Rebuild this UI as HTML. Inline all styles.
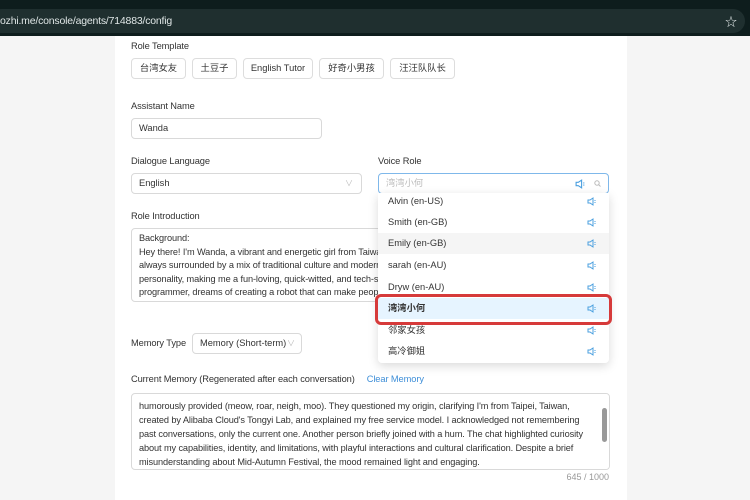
<!DOCTYPE html>
<html><head><meta charset="utf-8"><style>
*{margin:0;padding:0;box-sizing:border-box}
body{width:750px;height:500px;overflow:hidden;background:#f5f5f5;font-family:"Liberation Sans","Noto Sans CJK SC",sans-serif;color:#333;position:relative;font-size:10px}
.a{position:absolute}
.top{left:0;top:0;width:750px;height:36px;background:#0e1d1d}
.addr{left:-10px;top:9px;width:755px;height:24px;background:#1f2f2f;border-radius:12px;color:#dfe6e6;font-size:10.5px;line-height:24px;padding-left:10px;letter-spacing:-.2px}
.card{left:115px;top:36px;width:512px;height:464px;background:#fff}
.lbl{font-size:9.3px;color:#333;letter-spacing:-.1px}
.btn{height:21px;border:1px solid #ddd;border-radius:4px;font-size:9.3px;line-height:19px;text-align:center;background:#fff;color:#333}
.inp{border:1px solid #d9d9d9;border-radius:4px;background:#fff;font-size:9.3px;line-height:19px;padding-left:7px}
.txt{font-size:9.2px;line-height:13.3px;color:#333;padding:3px 7px;letter-spacing:-.1px}
.dd{left:378px;top:193px;width:231px;height:170px;background:#fff;box-shadow:0 3px 10px rgba(0,0,0,.15);border-radius:0 0 4px 4px;overflow:hidden}
.it{position:absolute;left:0;width:231px;height:21px;font-size:9.3px;line-height:21px;padding-left:10px;color:#333}
.sp{position:absolute;right:12px;top:6px;width:10px;height:9px}
</style></head><body>
<div class="a top"></div>
<div class="a addr">ozhi.me/console/agents/714883/config</div>
<div class="a" style="left:725px;top:13px;color:#e8eeee;font-size:12px">☆</div>
<div class="a card"></div>

<div class="a lbl" style="left:131px;top:41px">Role Template</div>
<div class="a btn" style="left:131px;top:58px;width:55px">台湾女友</div>
<div class="a btn" style="left:192px;top:58px;width:45px">土豆子</div>
<div class="a btn" style="left:243px;top:58px;width:70px">English Tutor</div>
<div class="a btn" style="left:319px;top:58px;width:65px">好奇小男孩</div>
<div class="a btn" style="left:390px;top:58px;width:65px">汪汪队队长</div>

<div class="a lbl" style="left:131px;top:101px">Assistant Name</div>
<div class="a inp" style="left:131px;top:118px;width:191px;height:21px">Wanda</div>

<div class="a lbl" style="left:131px;top:156px">Dialogue Language</div>
<div class="a inp" style="left:131px;top:173px;width:231px;height:21px">English<span style="position:absolute;right:8px;color:#bbb;font-size:8px">∨</span></div>
<div class="a lbl" style="left:378px;top:156px">Voice Role</div>
<div class="a inp" style="left:378px;top:173px;width:231px;height:21px;border-color:#7fb8ea;color:#bbb">湾湾小何<svg style="position:absolute;right:22px;top:5px" width="11" height="10" viewBox="0 0 10 9"><path d="M1 3h2l3-2v7L3 6H1z M8 3v1M8 5v1" fill="none" stroke="#4a9fdf" stroke-width="1"/></svg><svg style="position:absolute;right:7px;top:6px" width="7" height="7" viewBox="0 0 7 7"><circle cx="3" cy="3" r="2.2" fill="none" stroke="#bbb"/><path d="M4.6 4.6L6.5 6.5" stroke="#bbb"/></svg></div>

<div class="a lbl" style="left:131px;top:211px">Role Introduction</div>
<div class="a inp txt" style="left:131px;top:228px;width:280px;height:74px;overflow:hidden;white-space:nowrap;line-height:13.5px;padding-top:3px">Background:<br>Hey there! I'm Wanda, a vibrant and energetic girl from Taiwan<br>always surrounded by a mix of traditional culture and modern<br>personality, making me a fun-loving, quick-witted, and tech-savvy<br>programmer, dreams of creating a robot that can make people</div>

<div class="dd a">
<div class="it" style="top:-2px">Alvin (en-US)<svg class="sp" viewBox="0 0 10 9"><path d="M1 3h2l3-2v7L3 6H1z M8 3v1M8 5v1" fill="none" stroke="#4a9fdf" stroke-width="1"/></svg></div>
<div class="it" style="top:19px">Smith (en-GB)<svg class="sp" viewBox="0 0 10 9"><path d="M1 3h2l3-2v7L3 6H1z M8 3v1M8 5v1" fill="none" stroke="#4a9fdf" stroke-width="1"/></svg></div>
<div class="it" style="top:40px;background:#f5f5f5">Emily (en-GB)<svg class="sp" viewBox="0 0 10 9"><path d="M1 3h2l3-2v7L3 6H1z M8 3v1M8 5v1" fill="none" stroke="#4a9fdf" stroke-width="1"/></svg></div>
<div class="it" style="top:62px">sarah (en-AU)<svg class="sp" viewBox="0 0 10 9"><path d="M1 3h2l3-2v7L3 6H1z M8 3v1M8 5v1" fill="none" stroke="#4a9fdf" stroke-width="1"/></svg></div>
<div class="it" style="top:84px">Dryw (en-AU)<svg class="sp" viewBox="0 0 10 9"><path d="M1 3h2l3-2v7L3 6H1z M8 3v1M8 5v1" fill="none" stroke="#4a9fdf" stroke-width="1"/></svg></div>
<div class="it" style="top:105px;background:#e6f4ff;font-weight:bold">湾湾小何<svg class="sp" viewBox="0 0 10 9"><path d="M1 3h2l3-2v7L3 6H1z M8 3v1M8 5v1" fill="none" stroke="#4a9fdf" stroke-width="1"/></svg></div>
<div class="it" style="top:127px">邻家女孩<svg class="sp" viewBox="0 0 10 9"><path d="M1 3h2l3-2v7L3 6H1z M8 3v1M8 5v1" fill="none" stroke="#4a9fdf" stroke-width="1"/></svg></div>
<div class="it" style="top:148px">高冷御姐<svg class="sp" viewBox="0 0 10 9"><path d="M1 3h2l3-2v7L3 6H1z M8 3v1M8 5v1" fill="none" stroke="#4a9fdf" stroke-width="1"/></svg></div>
</div>
<div class="a" style="left:375px;top:294px;width:237px;height:31px;border:3px solid #d63a3a;border-radius:6px"></div>

<div class="a lbl" style="left:131px;top:338px">Memory Type</div>
<div class="a inp" style="left:192px;top:333px;width:110px;height:21px">Memory (Short-term)<span style="position:absolute;right:6px;color:#bbb;font-size:8px">∨</span></div>

<div class="a lbl" style="left:131px;top:374px">Current Memory (Regenerated after each conversation)<span style="color:#3f8fd8;margin-left:12px">Clear Memory</span></div>
<div class="a inp txt" style="left:131px;top:393px;width:479px;height:77px;overflow:hidden;white-space:nowrap;line-height:14px;padding-top:5px">humorously provided (meow, roar, neigh, moo). They questioned my origin, clarifying I'm from Taipei, Taiwan,<br>created by Alibaba Cloud's Tongyi Lab, and explained my free service model. I acknowledged not remembering<br>past conversations, only the current one. Another person briefly joined with a hum. The chat highlighted curiosity<br>about my capabilities, identity, and limitations, with playful interactions and cultural clarification. Despite a brief<br>misunderstanding about Mid-Autumn Festival, the mood remained light and engaging.
<div style="position:absolute;right:0;top:0;width:10px;height:75px;background:#fff"></div>
<div style="position:absolute;right:2px;top:14px;width:5px;height:34px;background:#999;border-radius:3px"></div></div>
<div class="a" style="left:560px;top:472px;width:49px;text-align:right;font-size:9px;color:#999">645 / 1000</div>
</body></html>
